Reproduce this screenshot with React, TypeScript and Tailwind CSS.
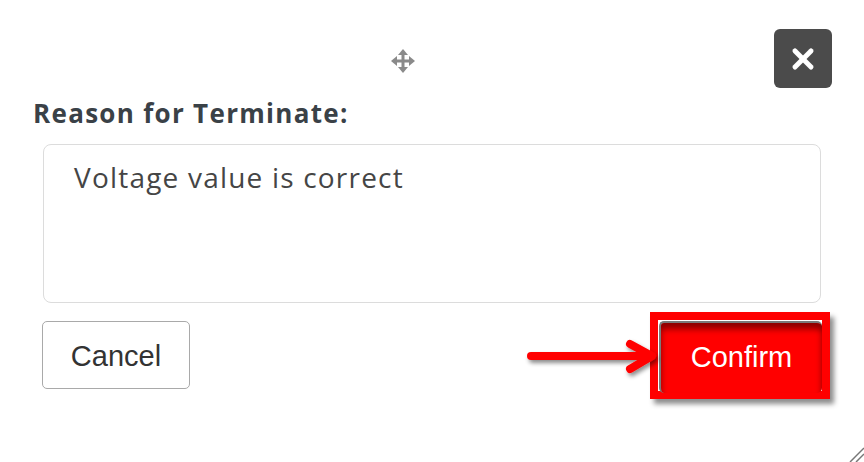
import { useState } from "react";

function MoveIcon() {
  return (
    <svg width="26" height="26" viewBox="0 0 26 26" className="text-[#8a8a8a]" fill="currentColor">
      <rect x="11.5" y="5" width="3" height="16" />
      <rect x="5" y="11.5" width="16" height="3" />
      <polygon points="13,1 18,7 8,7" />
      <polygon points="13,25 18,19 8,19" />
      <polygon points="1,13 7,8 7,18" />
      <polygon points="25,13 19,8 19,18" />
    </svg>
  );
}

function CloseIcon() {
  return (
    <svg width="24" height="24" viewBox="0 0 24 24" fill="none" stroke="white" strokeWidth="5" strokeLinecap="round">
      <path d="M4 4 L20 20" />
      <path d="M20 4 L4 20" />
    </svg>
  );
}

function Arrow() {
  return (
    <svg width="150" height="50" viewBox="0 0 150 50" className="absolute left-[522px] top-[332px]" style={{ overflow: "visible" }}>
      <defs>
        <filter id="sh" x="-20%" y="-50%" width="140%" height="200%">
          <feDropShadow dx="2" dy="3" stdDeviation="2" floodColor="#000" floodOpacity="0.45" />
        </filter>
      </defs>
      <g filter="url(#sh)" stroke="#ff0000" strokeWidth="8" strokeLinecap="round" strokeLinejoin="round" fill="none">
        <path d="M9 24 L128 24" />
        <path d="M108 12 L130 24 L108 37" />
      </g>
    </svg>
  );
}

export default function App() {
  const [reason, setReason] = useState("Voltage value is correct");

  return (
    <div className="relative w-[864px] h-[462px] bg-white overflow-hidden flex flex-col" style={{ fontFamily: "'Open Sans', Lato, sans-serif" }}>
      <div className="relative h-[94px] flex items-start pl-[390px]">
        <div className="mt-[48px]">
          <MoveIcon />
        </div>
        <button className="absolute left-[774px] top-[29px] w-[58px] h-[59px] rounded-[6px] bg-[#4b4b4b] flex items-center justify-center">
          <CloseIcon />
        </button>
      </div>

      <label className="pl-[33px] text-[26px] leading-[38px] font-bold text-[#3a4147] tracking-[1.3px]">
        Reason for Terminate:
      </label>

      <div className="pl-[43px] pt-[12px]">
        <textarea
          value={reason}
          onChange={(e) => setReason(e.target.value)}
          className="block w-[778px] h-[159px] resize-none rounded-[8px] border border-[#dcdcdc] px-[30px] pt-[15px] text-[28px] leading-[34px] tracking-[1.2px] text-[#454545] outline-none"
          style={{ fontFamily: "'Open Sans', Lato, sans-serif" }}
        />
      </div>

      <div className="flex items-start justify-between pl-[42px] pr-[42px] pt-[18px]">
        <button
          className="w-[148px] h-[68px] pt-[3px] rounded-[5px] border border-[#a9a9a9] bg-white text-[29px] text-[#333]"
          style={{ fontFamily: "'Liberation Sans', Arial, sans-serif" }}
        >
          Cancel
        </button>

        <div className="relative">
          <div className="absolute -left-[9px] -top-[9px] w-[180px] h-[87px] border-[8px] border-[#ff0000] shadow-[4px_5px_5px_rgba(0,0,0,0.45)]" />
          <button
            className="relative w-[163px] h-[72px] rounded-[5px] border-l-[2px] border-t-[2px] border-[#7a7a7a] bg-[#ff0000] text-[29px] text-white shadow-[inset_0_6px_6px_rgba(90,0,0,0.7)]"
            style={{ fontFamily: "'Liberation Sans', Arial, sans-serif" }}
          >
            Confirm
          </button>
        </div>
      </div>

      <Arrow />

      <svg width="16" height="16" viewBox="0 0 16 16" className="absolute right-0 bottom-0" stroke="#777" strokeWidth="1.5">
        <path d="M2 16 L16 2" />
        <path d="M8 16 L16 8" />
      </svg>
    </div>
  );
}
